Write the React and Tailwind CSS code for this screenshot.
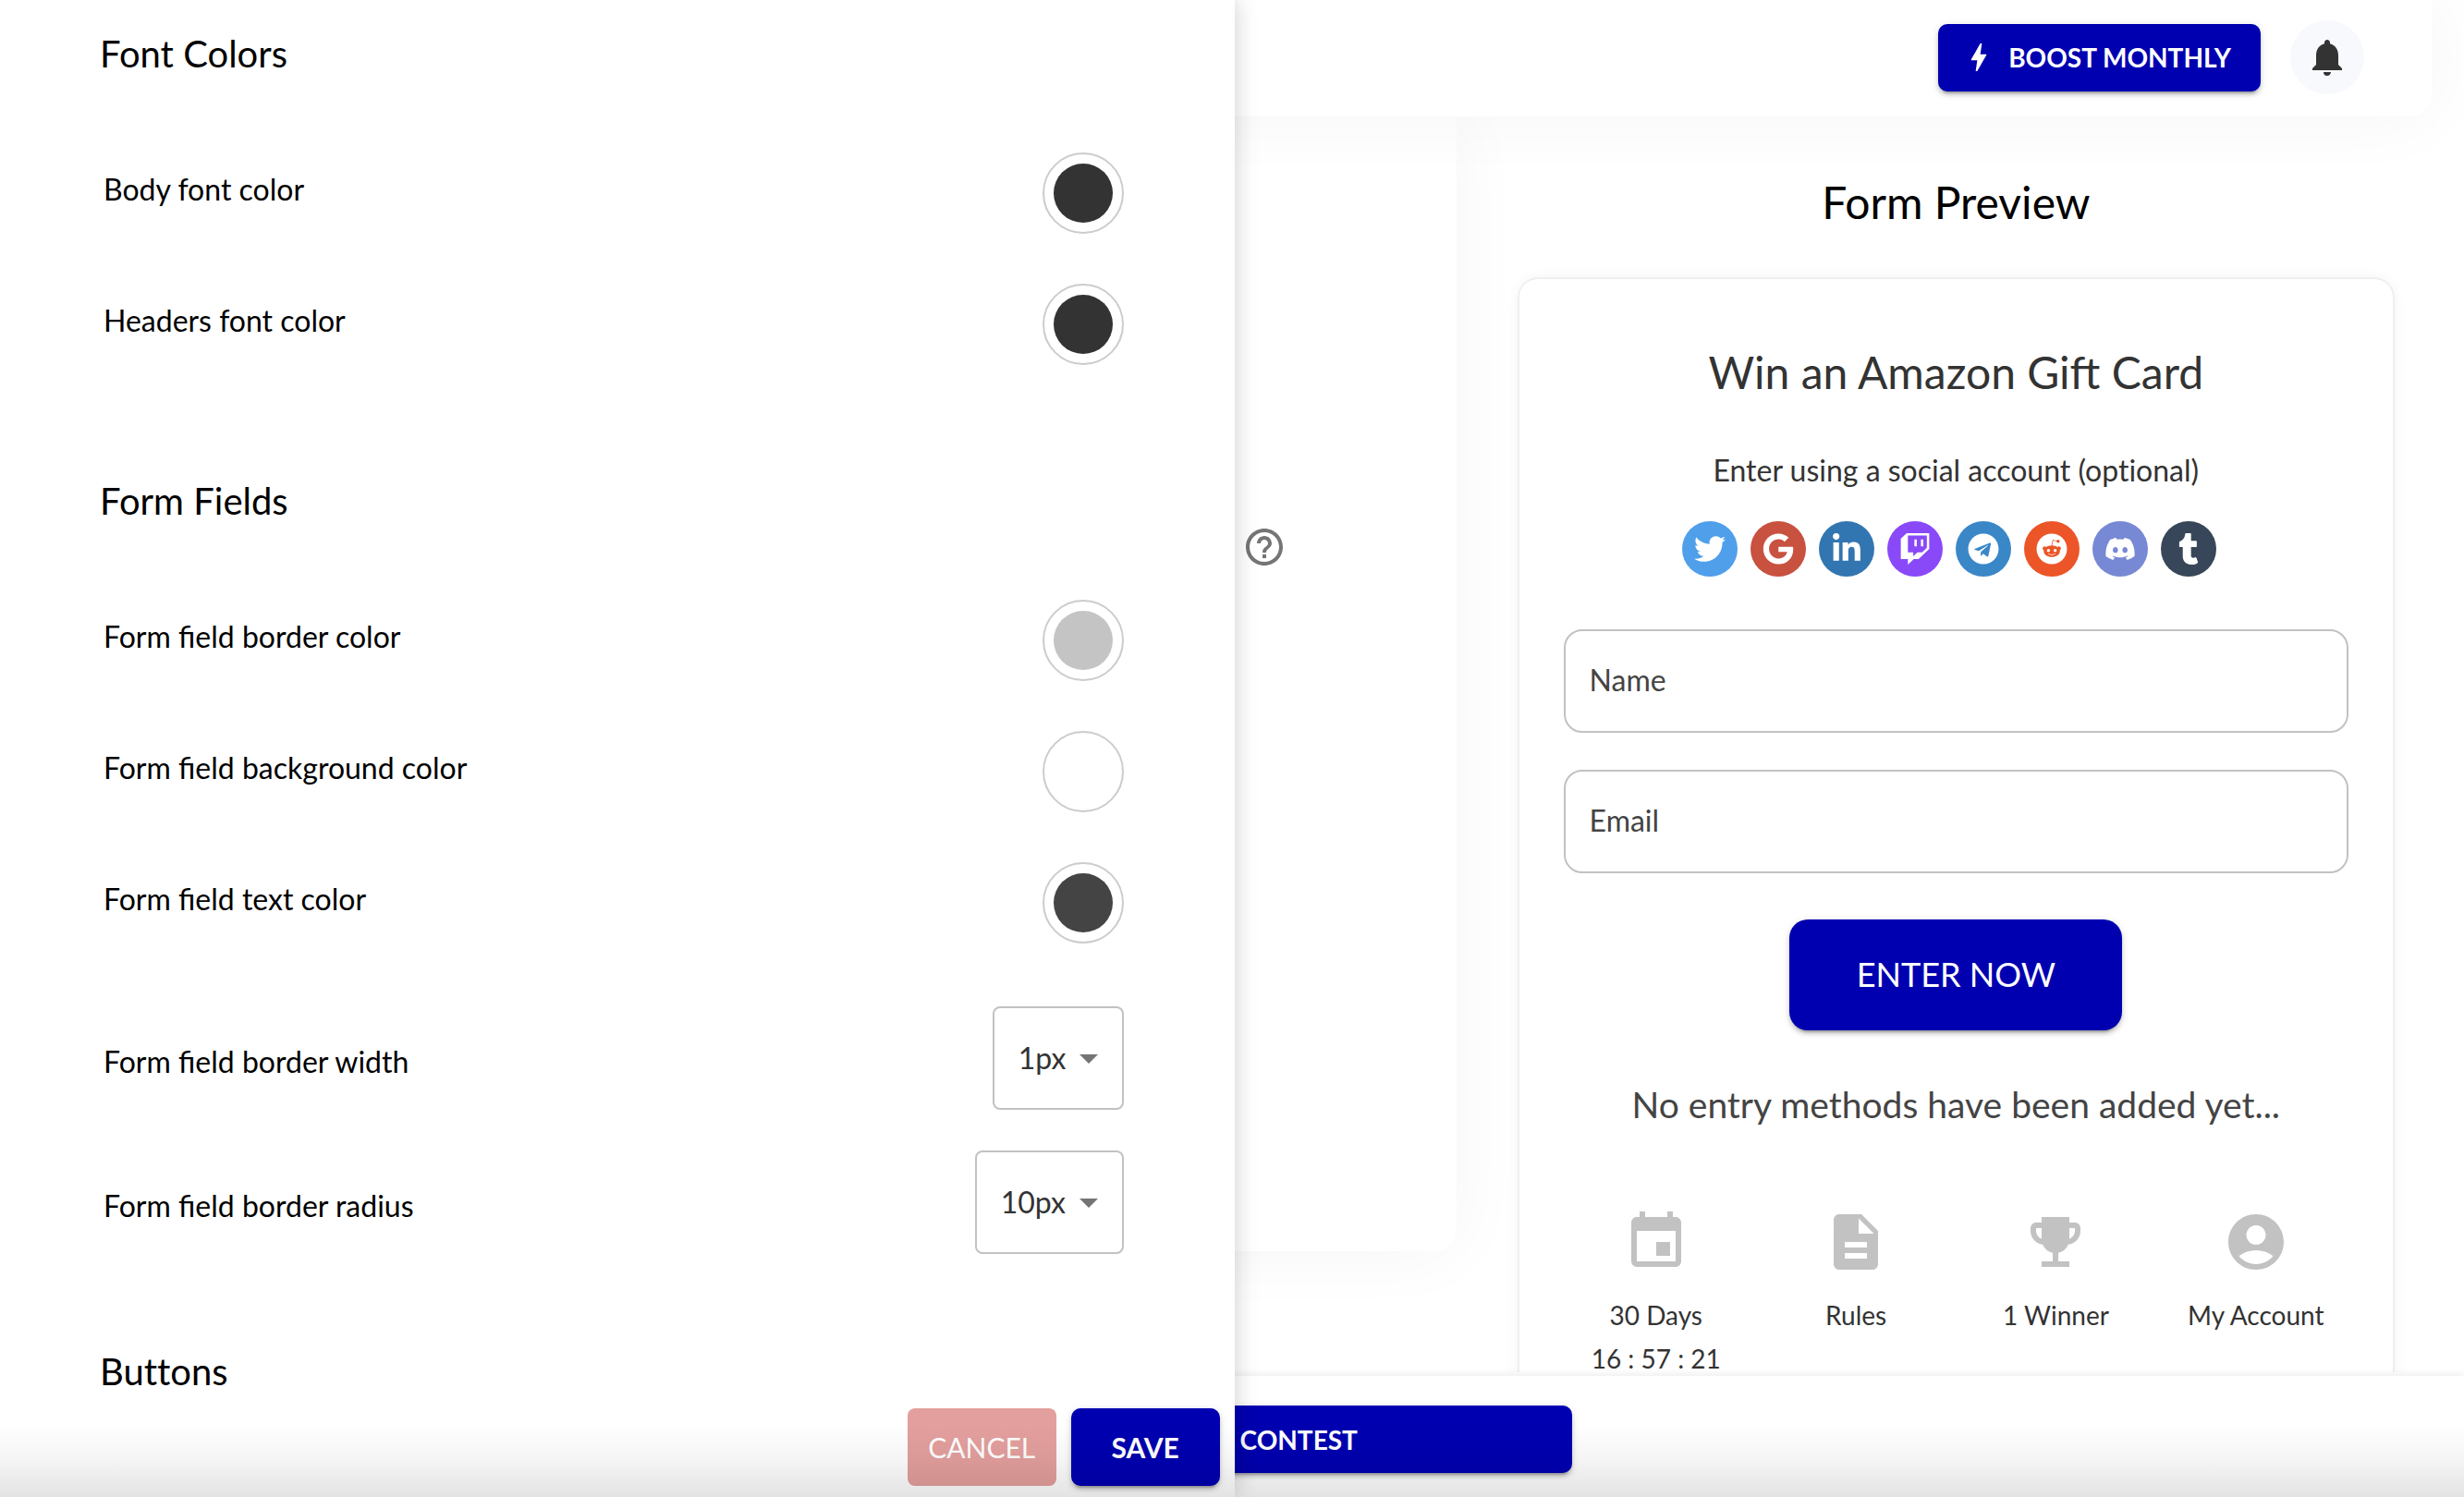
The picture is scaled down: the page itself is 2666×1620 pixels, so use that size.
import React from "react";
import {
  FaTwitter,
  FaGoogle,
  FaLinkedinIn,
  FaTwitch,
  FaTelegram,
  FaReddit,
  FaDiscord,
  FaTumblr,
} from "react-icons/fa";
import {
  MdEvent,
  MdDescription,
  MdEmojiEvents,
  MdAccountCircle,
  MdHelpOutline,
  MdNotifications,
  MdBolt,
  MdArrowDropDown,
} from "react-icons/md";

const raised =
  "shadow-[0_6px_2px_-4px_rgba(0,0,0,0.2),0_4px_4px_0_rgba(0,0,0,0.14),0_2px_10px_0_rgba(0,0,0,0.12)]";

function ColorRow({ id, label, fill }) {
  return (
    <div className="flex items-center justify-between">
      <label htmlFor={id} className="pb-2 text-[32px] leading-[48px] text-black">
        {label}
      </label>
      <button
        id={id}
        type="button"
        className="flex size-[88px] items-center justify-center rounded-full border-2 border-[#cccccc] bg-white"
      >
        <span className={`size-16 rounded-full ${fill}`} />
      </button>
    </div>
  );
}

function SelectRow({ id, label, value, options }) {
  return (
    <div className="flex items-center justify-between">
      <label htmlFor={id} className="pt-2 text-[32px] leading-[48px] text-black">
        {label}
      </label>
      <div className="relative">
        <select
          id={id}
          defaultValue={value}
          className="block h-28 appearance-none rounded-lg border-2 border-[#c2c2c2] bg-white pr-15 pl-[26px] text-[32px] text-[#333333]"
        >
          {options.map((o) => (
            <option key={o}>{o}</option>
          ))}
        </select>
        <MdArrowDropDown className="pointer-events-none absolute top-8 right-3.5 size-12 text-[#757575]" />
      </div>
    </div>
  );
}

function SectionTitle({ children }) {
  return (
    <h2 className="text-[40px] leading-[48px] text-black [font-variant-ligatures:none]">
      {children}
    </h2>
  );
}

function StyleDrawer() {
  return (
    <aside className="absolute inset-y-0 left-0 z-20 flex w-[50.1%] flex-col bg-white shadow-[0_0_24px_rgba(0,0,0,0.2)]">
      <div className="min-h-0 flex-1 overflow-hidden pt-[34px] pr-[120px] pl-[108px]">
        <SectionTitle>Font Colors</SectionTitle>
        <div className="mt-[83px] flex flex-col gap-[54px] pl-1">
          <ColorRow id="body-font" label="Body font color" fill="bg-[#333333]" />
          <ColorRow id="header-font" label="Headers font color" fill="bg-[#333333]" />
        </div>
        <div className="mt-[123px]">
          <SectionTitle>Form Fields</SectionTitle>
        </div>
        <div className="mt-[83px] flex flex-col gap-[54px] pl-1">
          <ColorRow id="field-border" label="Form field border color" fill="bg-[#c4c4c4]" />
          <ColorRow id="field-bg" label="Form field background color" fill="bg-white" />
          <ColorRow id="field-text" label="Form field text color" fill="bg-[#444444]" />
        </div>
        <div className="mt-[68px] flex flex-col gap-11 pl-1">
          <SelectRow
            id="border-width"
            label="Form field border width"
            value="1px"
            options={["0px", "1px", "2px", "3px"]}
          />
          <SelectRow
            id="border-radius"
            label="Form field border radius"
            value="10px"
            options={["0px", "5px", "10px", "20px"]}
          />
        </div>
        <div className="mt-[103px]">
          <SectionTitle>Buttons</SectionTitle>
        </div>
      </div>
      <div className="flex justify-end gap-4 pr-4 pb-3">
        <button
          type="button"
          className="h-[84px] w-[161px] rounded-lg bg-[#e39f9d] text-[30px] text-white"
        >
          CANCEL
        </button>
        <button
          type="button"
          className={`h-[84px] w-[161px] rounded-[10px] bg-[#0000b0] text-[30px] font-bold text-white ${raised}`}
        >
          SAVE
        </button>
      </div>
    </aside>
  );
}

const socials = [
  { name: "Twitter", Icon: FaTwitter, color: "bg-[#4f9feb]" },
  { name: "Google", Icon: FaGoogle, color: "bg-[#c85140]" },
  { name: "LinkedIn", Icon: FaLinkedinIn, color: "bg-[#3276b1]" },
  { name: "Twitch", Icon: FaTwitch, color: "bg-[#8a49f8]" },
  { name: "Telegram", Icon: FaTelegram, color: "bg-[#3a87c8]" },
  { name: "Reddit", Icon: FaReddit, color: "bg-[#ec5528]" },
  { name: "Discord", Icon: FaDiscord, color: "bg-[#7789d4]" },
  { name: "Tumblr", Icon: FaTumblr, color: "bg-[#374759]" },
];

const facts = [
  { Icon: MdEvent, lines: ["30 Days", "16 : 57 : 21"] },
  { Icon: MdDescription, lines: ["Rules"] },
  { Icon: MdEmojiEvents, lines: ["1 Winner"] },
  { Icon: MdAccountCircle, lines: ["My Account"] },
];

const fieldClass =
  "block h-28 w-full rounded-[20px] border-2 border-[#c2c2c2] bg-white px-[26px] pb-1 text-[32px] text-[#444444] placeholder:text-[#444444] placeholder:opacity-100";

function FormPreview() {
  return (
    <section className="min-w-0 flex-1 pt-[63px] pr-[77px] pl-[68px]">
      <h2 className="text-center text-[48px] leading-[60px] text-black">Form Preview</h2>
      <div className="mt-[53px] rounded-[20px] bg-white px-12 pt-[71px] pb-20 text-center text-[#333333] shadow-[0_0_0_2px_rgba(0,0,0,0.04),0_0_16px_rgba(0,0,0,0.06)]">
        <h3 className="text-[48px] leading-[60px]">Win an Amazon Gift Card</h3>
        <p className="mt-[52px] text-[32px] leading-[48px] [font-variant-ligatures:none]">
          Enter using a social account (optional)
        </p>
        <div className="mt-[31px] flex justify-center">
          {socials.map(({ name, Icon, color }) => (
            <button
              key={name}
              type="button"
              aria-label={name}
              className={`mr-[14px] flex size-[60px] items-center justify-center rounded-full text-white ${color}`}
            >
              <Icon className="size-[34px]" />
            </button>
          ))}
        </div>
        <div className="mt-[57px] flex flex-col gap-10">
          <input type="text" aria-label="Name" placeholder="Name" className={fieldClass} />
          <input type="email" aria-label="Email" placeholder="Email" className={fieldClass} />
        </div>
        <button
          type="button"
          className={`mt-[50px] h-[120px] w-[360px] rounded-[20px] bg-[#0000b0] pb-0.5 text-[36px] text-white ${raised}`}
        >
          ENTER NOW
        </button>
        <p className="mt-[50px] text-[39px] leading-[60px] text-[#444444]">
          No entry methods have been added yet...
        </p>
        <div className="-mx-2 mt-[83px] grid grid-cols-4">
          {facts.map(({ Icon, lines }) => (
            <div key={lines[0]} className="flex flex-col items-center">
              <Icon className="mb-5 size-[72px] text-[#c2c2c2]" />
              {lines.map((line) => (
                <span key={line} className="text-[28px] leading-[47px]">
                  {line}
                </span>
              ))}
            </div>
          ))}
        </div>
      </div>
    </section>
  );
}

export default function App() {
  return (
    <div className="relative flex h-screen flex-col overflow-hidden bg-white font-['Lato',sans-serif]">
      <header className="relative z-10 mr-[35px] flex h-[126px] shrink-0 items-center justify-end gap-8 rounded-b-3xl bg-white pr-[73px] pb-0.5 shadow-[0_0_80px_rgba(0,0,0,0.045)]">
        <button
          type="button"
          className={`flex h-[73px] items-center rounded-[10px] bg-[#0000b0] pr-8 pl-6 text-[28px] font-bold text-white ${raised}`}
        >
          <MdBolt className="mr-3 size-10" />
          BOOST MONTHLY
        </button>
        <button
          type="button"
          aria-label="Notifications"
          className="flex size-20 items-center justify-center rounded-full bg-[#f8f9fd] text-[#333333]"
        >
          <MdNotifications className="size-12" />
        </button>
      </header>

      <main className="flex min-h-0 flex-1 overflow-hidden">
        <section className="mb-[131px] flex w-[59.1%] items-start justify-end rounded-b-3xl bg-white pt-[442px] pr-[184px] shadow-[0_0_80px_rgba(0,0,0,0.045)]">
          <button type="button" aria-label="Help" className="text-[#757575]">
            <MdHelpOutline className="size-12" />
          </button>
        </section>
        <FormPreview />
      </main>

      <footer className="relative mt-1 flex h-[131px] shrink-0 items-start bg-white pt-8 shadow-[0_0_10px_rgba(0,0,0,0.1)]">
        <button
          type="button"
          className={`ml-[37.5%] h-[73px] w-[26.3%] rounded-[10px] bg-[#0000b0] text-[28px] font-bold text-white ${raised}`}
        >
          CREATE CONTEST
        </button>
      </footer>

      <StyleDrawer />
      <div className="pointer-events-none absolute inset-x-0 bottom-0 z-30 h-20 bg-linear-to-b from-transparent via-black/4 to-black/11" />
    </div>
  );
}
